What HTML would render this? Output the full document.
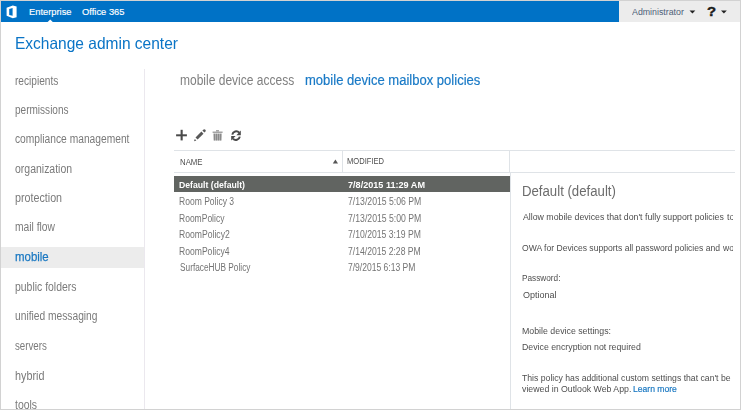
<!DOCTYPE html>
<html><head><meta charset="utf-8">
<style>
*{margin:0;padding:0;box-sizing:border-box}
html,body{width:741px;height:410px;overflow:hidden;background:#fff;font-family:"Liberation Sans",sans-serif}
.t{position:absolute;white-space:nowrap}
.r{position:absolute}
</style></head><body>
<div id="wrap" style="position:absolute;left:0;top:0;width:741px;height:410px;overflow:hidden;filter:blur(0.35px)">
<div class="r" style="left:1px;top:1px;width:618px;height:21.3px;background:#0072c6"></div>
<div class="r" style="left:619px;top:1px;width:121px;height:21.3px;background:#ececec"></div>
<div class="r" style="left:1px;top:246.5px;width:143px;height:21px;background:#ececec"></div>
<div class="r" style="left:144px;top:69px;width:1px;height:341px;background:#ebe8ee"></div>
<div class="r" style="left:174px;top:150px;width:560.5px;height:1px;background:#dfe3e7"></div>
<div class="r" style="left:174px;top:172px;width:560.5px;height:1px;background:#dfe3e7"></div>
<div class="r" style="left:341.5px;top:150px;width:1px;height:22px;background:#dfe3e7"></div>
<div class="r" style="left:509px;top:150px;width:1px;height:22px;background:#dfe3e7"></div>
<div class="r" style="left:510px;top:172px;width:1px;height:238px;background:#dfe3e7"></div>
<div class="r" style="left:174px;top:176.4px;width:335.8px;height:15.7px;background:#616461"></div>
<svg class="r" style="left:0;top:0" width="741" height="410" viewBox="0 0 741 410">
  <!-- frame -->
  <rect x="0.5" y="0.5" width="740" height="409" fill="none" stroke="#d2d2d2" stroke-width="1"/>
  <!-- notch -->
  <path d="M47.4 22.2 L50.2 19.6 L53 22.2 Z" fill="#fff"/>
  <!-- office logo -->
  <path fill="#fff" fill-rule="evenodd" d="M6.6 7.8 L12.8 5.6 L16.6 6.4 L16.6 17.3 L12.8 18.2 L6.6 15.8 Z M9.2 9.0 L12.6 8.1 L12.6 15.7 L9.2 14.9 Z"/>
  <!-- header dropdowns -->
  <path d="M689.5 10.4 L695.3 10.4 L692.4 13.4 Z" fill="#222"/>
  <path d="M721 10.4 L726.8 10.4 L723.9 13.4 Z" fill="#222"/>
  <!-- plus -->
  <rect x="176.1" y="134.3" width="10.8" height="2" fill="#4a4a4a"/>
  <rect x="180.6" y="129.8" width="2.1" height="10.6" fill="#4a4a4a"/>
  <!-- pencil -->
  <g fill="#585858">
    <path d="M195.5 137.5 L201.4 131.6 L203.5 133.7 L197.6 139.6 Z"/>
    <path d="M202.4 130.6 L203.6 129.5 Q204.5 128.9 205.4 129.8 Q206.2 130.7 205.5 131.6 L204.4 132.6 Z"/>
    <path d="M194.0 141.3 L194.8 138.9 L196.4 140.5 Z"/>
  </g>
  <!-- trash -->
  <rect x="216" y="130" width="3" height="1.6" fill="#a8a8a8"/>
  <rect x="212.6" y="131.5" width="10" height="1.5" fill="#a4a4a4"/>
  <path d="M213.2 133.5 L221.9 133.5 L221.6 140.6 L213.5 140.6 Z" fill="#b4b4b4"/>
  <g fill="#8a8a8a">
    <rect x="214.0" y="133.8" width="1.1" height="6.6"/>
    <rect x="216.0" y="133.8" width="1.1" height="6.6"/>
    <rect x="218.0" y="133.8" width="1.1" height="6.6"/>
    <rect x="220.0" y="133.8" width="1.1" height="6.6"/>
  </g>
  <!-- refresh -->
  <g fill="none" stroke="#4a4a4a" stroke-width="2">
    <path d="M232.3 134.6 A4 4 0 0 1 239.2 132.6"/>
    <path d="M239.8 136.6 A4 4 0 0 1 232.9 138.6"/>
  </g>
  <path d="M240.8 130.6 L240.8 135.2 L236.4 135.2 Z" fill="#4a4a4a"/>
  <path d="M231.2 140.6 L231.2 136.0 L235.6 136.0 Z" fill="#4a4a4a"/>
  <!-- sort arrow -->
  <path d="M332.8 163.5 L338.0 163.5 L335.4 159.6 Z" fill="#555"/>
</svg>
<div class="t" style="left:28.92px;top:7.00px;font-size:9.6px;line-height:9.6px;color:#fff;transform:scaleX(0.9718);transform-origin:0 0;-webkit-text-stroke:0.15px #fff;">Enterprise</div>
<div class="t" style="left:82.41px;top:7.00px;font-size:9.6px;line-height:9.6px;color:#fff;transform:scaleX(0.9766);transform-origin:0 0;-webkit-text-stroke:0.15px #fff;">Office 365</div>
<div class="t" style="left:631.60px;top:7.00px;font-size:9.6px;line-height:9.6px;color:#4d5f78;transform:scaleX(0.9184);transform-origin:0 0;">Administrator</div>
<div class="t" style="left:706.74px;top:5.00px;font-size:13.5px;line-height:13.5px;color:#1a1a1a;font-weight:bold;transform:scaleX(1.1014);transform-origin:0 0;-webkit-text-stroke:0.4px #1a1a1a;">?</div>
<div class="t" style="left:15.28px;top:35.00px;font-size:16.5px;line-height:16.5px;color:#0a74c6;transform:scaleX(0.9400);transform-origin:0 0;">Exchange admin center</div>
<div class="t" style="left:14.85px;top:75.00px;font-size:12.5px;line-height:12.5px;color:#7a7a7a;transform:scaleX(0.8103);transform-origin:0 0;">recipients</div>
<div class="t" style="left:14.86px;top:104.00px;font-size:12.5px;line-height:12.5px;color:#7a7a7a;transform:scaleX(0.8028);transform-origin:0 0;">permissions</div>
<div class="t" style="left:15.09px;top:133.00px;font-size:12.5px;line-height:12.5px;color:#7a7a7a;transform:scaleX(0.8196);transform-origin:0 0;">compliance management</div>
<div class="t" style="left:15.08px;top:163.00px;font-size:12.5px;line-height:12.5px;color:#7a7a7a;transform:scaleX(0.8383);transform-origin:0 0;">organization</div>
<div class="t" style="left:14.81px;top:192.00px;font-size:12.5px;line-height:12.5px;color:#7a7a7a;transform:scaleX(0.8574);transform-origin:0 0;">protection</div>
<div class="t" style="left:14.84px;top:221.00px;font-size:12.5px;line-height:12.5px;color:#7a7a7a;transform:scaleX(0.8225);transform-origin:0 0;">mail flow</div>
<div class="t" style="left:14.77px;top:251.00px;font-size:12.5px;line-height:12.5px;color:#1a78c2;transform:scaleX(0.9155);transform-origin:0 0;-webkit-text-stroke:0.25px #1a78c2;">mobile</div>
<div class="t" style="left:14.83px;top:281.00px;font-size:12.5px;line-height:12.5px;color:#7a7a7a;transform:scaleX(0.8343);transform-origin:0 0;">public folders</div>
<div class="t" style="left:14.85px;top:310.00px;font-size:12.5px;line-height:12.5px;color:#7a7a7a;transform:scaleX(0.8185);transform-origin:0 0;">unified messaging</div>
<div class="t" style="left:15.19px;top:340.00px;font-size:12.5px;line-height:12.5px;color:#7a7a7a;transform:scaleX(0.7781);transform-origin:0 0;">servers</div>
<div class="t" style="left:14.72px;top:370.00px;font-size:12.5px;line-height:12.5px;color:#7a7a7a;transform:scaleX(0.8642);transform-origin:0 0;">hybrid</div>
<div class="t" style="left:15.33px;top:399.00px;font-size:12.5px;line-height:12.5px;color:#7a7a7a;transform:scaleX(0.8372);transform-origin:0 0;">tools</div>
<div class="t" style="left:180.03px;top:73.00px;font-size:14px;line-height:14px;color:#808080;transform:scaleX(0.8580);transform-origin:0 0;">mobile device access</div>
<div class="t" style="left:305.16px;top:73.00px;font-size:14px;line-height:14px;color:#1a7ac6;transform:scaleX(0.9310);transform-origin:0 0;-webkit-text-stroke:0.2px #1a7ac6;">mobile device mailbox policies</div>
<div class="t" style="left:179.76px;top:158.00px;font-size:8.5px;line-height:8.5px;color:#4e4e4e;transform:scaleX(0.9191);transform-origin:0 0;">NAME</div>
<div class="t" style="left:347.38px;top:157.00px;font-size:8.5px;line-height:8.5px;color:#4e4e4e;transform:scaleX(0.8911);transform-origin:0 0;">MODIFIED</div>
<div class="t" style="left:179.45px;top:180.00px;font-size:9.5px;line-height:9.5px;color:#fff;font-weight:bold;transform:scaleX(0.9129);transform-origin:0 0;">Default (default)</div>
<div class="t" style="left:348.02px;top:180.00px;font-size:9.5px;line-height:9.5px;color:#fff;font-weight:bold;transform:scaleX(0.9572);transform-origin:0 0;">7/8/2015 11:29 AM</div>
<div class="t" style="left:179.32px;top:197.00px;font-size:10px;line-height:10px;color:#747474;transform:scaleX(0.8544);transform-origin:0 0;">Room Policy 3</div>
<div class="t" style="left:347.97px;top:197.00px;font-size:10px;line-height:10px;color:#747474;transform:scaleX(0.8678);transform-origin:0 0;">7/13/2015 5:06 PM</div>
<div class="t" style="left:179.32px;top:214.00px;font-size:10px;line-height:10px;color:#747474;transform:scaleX(0.8514);transform-origin:0 0;">RoomPolicy</div>
<div class="t" style="left:347.97px;top:214.00px;font-size:10px;line-height:10px;color:#747474;transform:scaleX(0.8678);transform-origin:0 0;">7/13/2015 5:00 PM</div>
<div class="t" style="left:179.31px;top:230.00px;font-size:10px;line-height:10px;color:#747474;transform:scaleX(0.8611);transform-origin:0 0;">RoomPolicy2</div>
<div class="t" style="left:347.97px;top:230.00px;font-size:10px;line-height:10px;color:#747474;transform:scaleX(0.8630);transform-origin:0 0;">7/10/2015 3:19 PM</div>
<div class="t" style="left:179.31px;top:247.00px;font-size:10px;line-height:10px;color:#747474;transform:scaleX(0.8581);transform-origin:0 0;">RoomPolicy4</div>
<div class="t" style="left:347.97px;top:247.00px;font-size:10px;line-height:10px;color:#747474;transform:scaleX(0.8606);transform-origin:0 0;">7/14/2015 2:28 PM</div>
<div class="t" style="left:179.59px;top:263.00px;font-size:10px;line-height:10px;color:#747474;transform:scaleX(0.8284);transform-origin:0 0;">SurfaceHUB Policy</div>
<div class="t" style="left:347.97px;top:263.00px;font-size:10px;line-height:10px;color:#747474;transform:scaleX(0.8531);transform-origin:0 0;">7/9/2015 6:13 PM</div>
<div class="r" style="left:0;top:0;width:733px;height:410px;overflow:hidden"><div class="t" style="left:521.96px;top:184.00px;font-size:14px;line-height:14px;color:#6c6c6c;transform:scaleX(0.9426);transform-origin:0 0;">Default (default)</div>
<div class="t" style="left:522.80px;top:212.00px;font-size:9.5px;line-height:9.5px;color:#4e4e4e;transform:scaleX(0.9223);transform-origin:0 0;">Allow mobile devices that don&#39;t fully support policies</div>
<div class="t" style="left:522.40px;top:243.00px;font-size:9.5px;line-height:9.5px;color:#4e4e4e;transform:scaleX(0.9029);transform-origin:0 0;">OWA for Devices supports all password policies and</div>
<div class="t" style="left:726.70px;top:212.00px;font-size:9.5px;line-height:9.5px;color:#4e4e4e;transform:scaleX(0.9223);transform-origin:0 0;">to</div>
<div class="t" style="left:722.60px;top:243.00px;font-size:9.5px;line-height:9.5px;color:#4e4e4e;transform:scaleX(0.9029);transform-origin:0 0;">wo</div>
<div class="t" style="left:521.71px;top:273.00px;font-size:9.5px;line-height:9.5px;color:#4e4e4e;transform:scaleX(0.8665);transform-origin:0 0;">Password:</div>
<div class="t" style="left:523.02px;top:290.00px;font-size:9.5px;line-height:9.5px;color:#4e4e4e;transform:scaleX(0.9477);transform-origin:0 0;">Optional</div>
<div class="t" style="left:521.66px;top:326.00px;font-size:9.5px;line-height:9.5px;color:#4e4e4e;transform:scaleX(0.9259);transform-origin:0 0;">Mobile device settings:</div>
<div class="t" style="left:522.26px;top:342.00px;font-size:9.5px;line-height:9.5px;color:#4e4e4e;transform:scaleX(0.9224);transform-origin:0 0;">Device encryption not required</div>
<div class="t" style="left:522.22px;top:373.00px;font-size:9.5px;line-height:9.5px;color:#4e4e4e;transform:scaleX(0.9111);transform-origin:0 0;">This policy has additional custom settings that can&#39;t be</div>
<div class="t" style="left:522.40px;top:384.00px;font-size:9.5px;line-height:9.5px;color:#4e4e4e;transform:scaleX(0.9219);transform-origin:0 0;">viewed in Outlook Web App.</div>
<div class="t" style="left:633.28px;top:384.00px;font-size:9.5px;line-height:9.5px;color:#1a78c2;transform:scaleX(0.9030);transform-origin:0 0;-webkit-text-stroke:0.2px #1a78c2;">Learn more</div>
</div>
</div>
</body></html>
